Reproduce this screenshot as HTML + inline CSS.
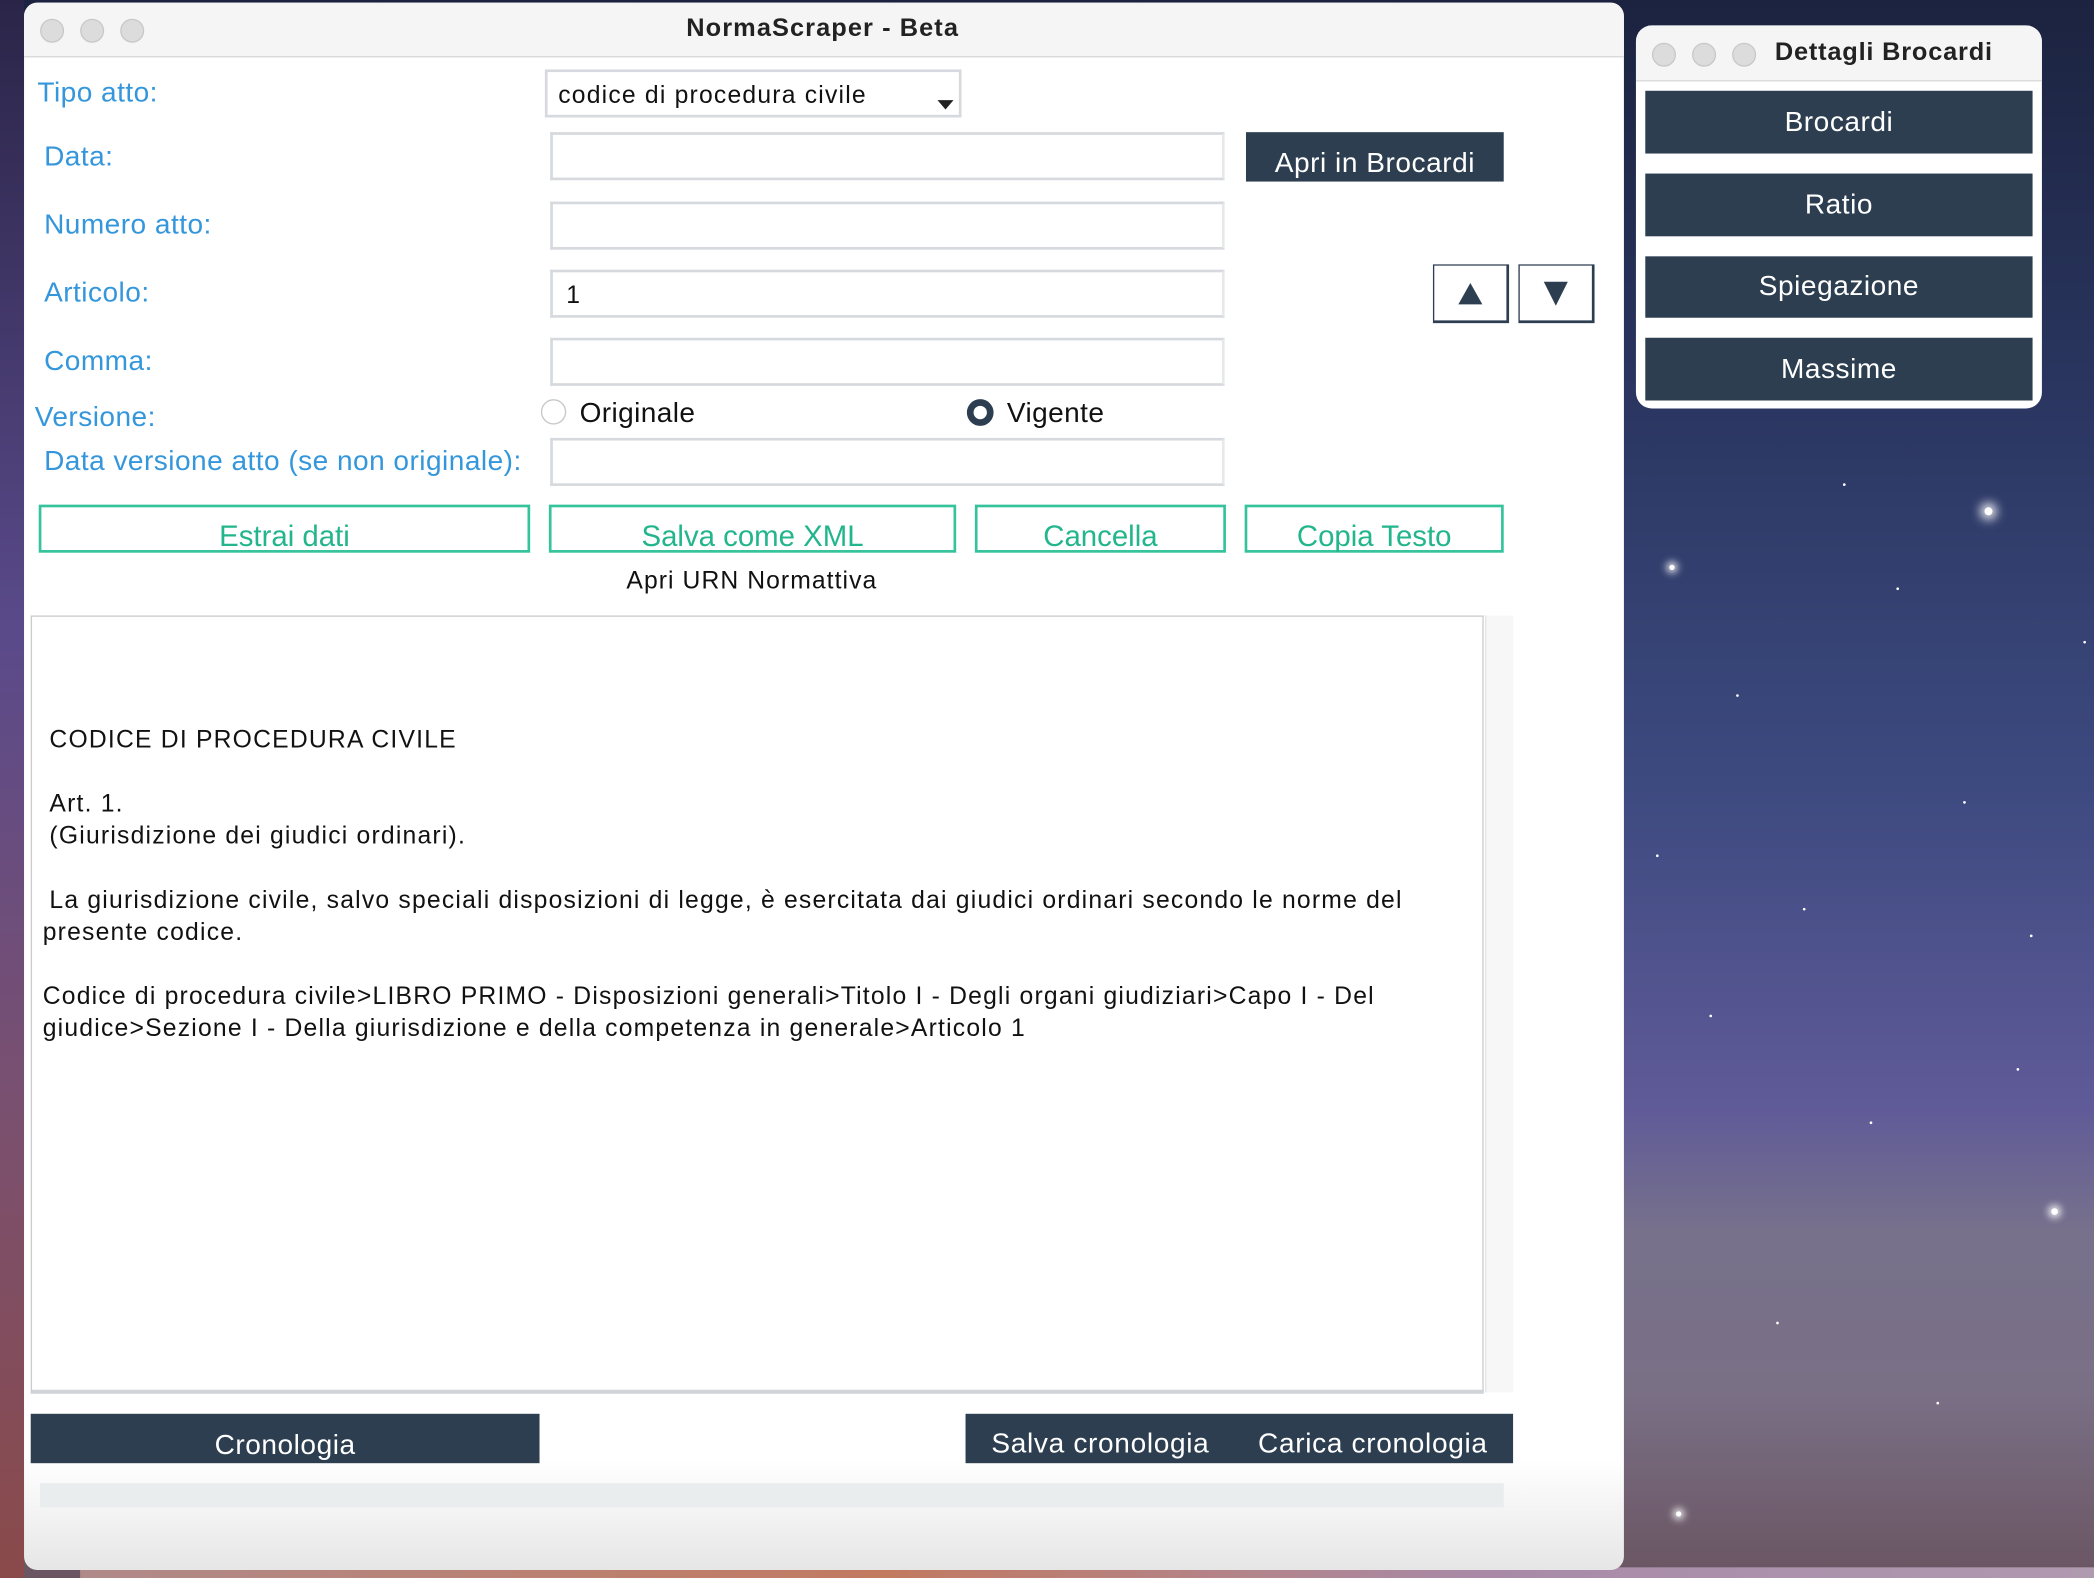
<!DOCTYPE html>
<html><head><meta charset="utf-8"><style>
html,body{margin:0;padding:0;width:2094px;height:1578px;overflow:hidden;}
body{background:#2a3358;}
#w{position:absolute;left:0;top:0;width:1568px;height:1182px;transform:scale(1.33546,1.33503);transform-origin:0 0;font-family:"Liberation Sans",Arial,sans-serif;overflow:hidden;
background:linear-gradient(180deg,#1c2340 0%,#2a3660 25%,#3d4a80 50%,#5f5a98 70%,#77718c 78%,#7a7086 88%,#6a5562 100%);}
.a{position:absolute;}
.lbl{position:absolute;color:#3496db;font-size:21px;letter-spacing:0.35px;}
.inp{position:absolute;left:412px;width:501px;height:32px;border:2px solid #d6d9dd;border-right-color:#e6e8ea;background:#fff;}
.gb{position:absolute;top:378px;height:32px;border:2px solid #34c39b;color:#23b58c;font-size:22px;text-align:center;line-height:44px;letter-spacing:0px;background:#fff;}
.db{position:absolute;background:#2c3e50;color:#fff;font-size:21px;text-align:center;letter-spacing:0.4px;}
.tl{position:absolute;width:16px;height:16px;border-radius:50%;background:#dcdcdc;border:1px solid #c8c8c8;}
.t{position:absolute;font-size:18.5px;color:#111;white-space:nowrap;letter-spacing:0.9px;}
.star{position:absolute;width:2px;height:2px;border-radius:50%;background:#fff;}
</style></head><body><div id="w">
<div class="a" style="left:0;top:0;width:18px;height:1182px;background:linear-gradient(180deg,#2a2548,#5a4a8a 40%,#7a5070 70%,#8a4a4a)"></div>
<div class="a" style="left:60px;top:1174px;width:1508px;height:8px;background:linear-gradient(90deg,#b08a8a,#c27a60 40%,#a88aa8 70%,#b09ab0)"></div>
<!-- stars -->
<div class="star" style="left:1486px;top:380px;width:6px;height:6px;box-shadow:0 0 8px 3px #fff"></div>
<div class="star" style="left:1250px;top:423px;width:4px;height:4px;box-shadow:0 0 6px 2px #fff"></div>
<div class="star" style="left:1536px;top:905px;width:5px;height:5px;box-shadow:0 0 6px 2px #fff"></div>
<div class="star" style="left:1255px;top:1132px;width:4px;height:4px;box-shadow:0 0 6px 2px #fff"></div>
<div class="star" style="left:1380px;top:362px"></div><div class="star" style="left:1420px;top:440px"></div><div class="star" style="left:1300px;top:520px"></div><div class="star" style="left:1470px;top:600px"></div><div class="star" style="left:1350px;top:680px"></div><div class="star" style="left:1280px;top:760px"></div><div class="star" style="left:1510px;top:800px"></div><div class="star" style="left:1400px;top:840px"></div><div class="star" style="left:1330px;top:990px"></div><div class="star" style="left:1450px;top:1050px"></div><div class="star" style="left:1520px;top:700px"></div><div class="star" style="left:1240px;top:640px"></div><div class="star" style="left:1560px;top:480px"></div>

<!-- main window -->
<div class="a" style="left:18px;top:2px;width:1198px;height:1174px;border-radius:10px;background:linear-gradient(180deg,#fff 0%,#fff 93%,#e6e6e6 100%);overflow:hidden">
 <div class="a" style="left:0;top:0;width:1198px;height:40px;background:#f5f5f5;border-bottom:1px solid #d8d8d8"></div>
 <div class="tl" style="left:12px;top:12px"></div><div class="tl" style="left:42px;top:12px"></div><div class="tl" style="left:72px;top:12px"></div>
 <div class="a" style="left:0;width:1196px;top:9px;text-align:center;font-weight:bold;font-size:19px;color:#222;letter-spacing:0.8px">NormaScraper - Beta</div>
</div>
<div class="lbl" style="left:28px;top:58px">Tipo atto:</div>
<div class="lbl" style="left:33px;top:106px">Data:</div>
<div class="lbl" style="left:33px;top:157px">Numero atto:</div>
<div class="lbl" style="left:33px;top:208px">Articolo:</div>
<div class="lbl" style="left:33px;top:259px">Comma:</div>
<div class="lbl" style="left:26px;top:301px">Versione:</div>
<div class="lbl" style="left:33px;top:334px">Data versione atto (se non originale):</div>

<div class="a" style="left:408px;top:52px;width:308px;height:32px;border:2px solid #d6d9dd;background:#fff"></div>
<div class="t" style="left:418px;top:60px">codice di procedura civile</div>
<div class="a" style="left:702px;top:75px;width:0;height:0;border-left:6px solid transparent;border-right:6px solid transparent;border-top:7px solid #222"></div>

<div class="inp" style="top:99px"></div>
<div class="inp" style="top:151px"></div>
<div class="inp" style="top:202px"></div><div class="t" style="left:424px;top:210px">1</div>
<div class="inp" style="top:253px"></div>
<div class="inp" style="top:328px"></div>

<div class="db" style="left:933px;top:99px;width:193px;height:37px;line-height:48px">Apri in Brocardi</div>
<div class="a" style="left:1073px;top:198px;width:54px;height:41px;border:2px solid #2c3e50;border-top-width:1px;border-left-width:1px;background:#fff"></div>
<div class="a" style="left:1092px;top:212px;width:0;height:0;border-left:9px solid transparent;border-right:9px solid transparent;border-bottom:16px solid #2c3e50"></div>
<div class="a" style="left:1137px;top:198px;width:54px;height:41px;border:2px solid #2c3e50;border-top-width:1px;border-left-width:1px;background:#fff"></div>
<div class="a" style="left:1156px;top:211px;width:0;height:0;border-left:9px solid transparent;border-right:9px solid transparent;border-top:18px solid #2c3e50"></div>

<div class="a" style="left:405px;top:299px;width:17px;height:17px;border-radius:50%;border:1.5px solid #c8c8c8;background:#fff"></div>
<div class="a" style="left:434px;top:298px;font-size:21px;color:#111;letter-spacing:0.3px">Originale</div>
<div class="a" style="left:724px;top:299px;width:10px;height:10px;border-radius:50%;border:5px solid #2c3e50;background:#fff"></div>
<div class="a" style="left:754px;top:298px;font-size:21px;color:#111;letter-spacing:0.3px">Vigente</div>

<div class="gb" style="left:29px;width:364px">Estrai dati</div>
<div class="gb" style="left:411px;width:301px">Salva come XML</div>
<div class="gb" style="left:730px;width:184px">Cancella</div>
<div class="gb" style="left:932px;width:190px">Copia Testo</div>
<div class="a" style="left:300px;width:526px;top:424px;text-align:center;font-size:18.5px;color:#111;letter-spacing:0.8px">Apri URN Normattiva</div>

<div class="a" style="left:23px;top:461px;width:1086px;height:579px;border:1px solid #ccc;border-bottom:3px solid #d0d4d8;background:#fff"></div>
<div class="a" style="left:1112px;top:461px;width:20px;height:582px;background:#f7f7f7;border-left:1px solid #e6e6e6"></div>
<div class="t" style="left:37px;top:543px">CODICE DI PROCEDURA CIVILE</div>
<div class="t" style="left:37px;top:591px">Art. 1.</div>
<div class="t" style="left:37px;top:615px">(Giurisdizione dei giudici ordinari).</div>
<div class="t" style="left:37px;top:663px">La giurisdizione civile, salvo speciali disposizioni di legge, è esercitata dai giudici ordinari secondo le norme del</div>
<div class="t" style="left:32px;top:687px">presente codice.</div>
<div class="t" style="left:32px;top:735px">Codice di procedura civile&gt;LIBRO PRIMO - Disposizioni generali&gt;Titolo I - Degli organi giudiziari&gt;Capo I - Del</div>
<div class="t" style="left:32px;top:759px">giudice&gt;Sezione I - Della giurisdizione e della competenza in generale&gt;Articolo 1</div>

<div class="db" style="left:23px;top:1059px;width:381px;height:37px;line-height:48px">Cronologia</div>
<div class="db" style="left:723px;top:1059px;width:410px;height:37px"></div>
<div class="a" style="left:724px;width:200px;top:1070px;text-align:center;color:#fff;font-size:21px;letter-spacing:0.5px">Salva cronologia</div>
<div class="a" style="left:928px;width:200px;top:1070px;text-align:center;color:#fff;font-size:21px;letter-spacing:0.5px">Carica cronologia</div>
<div class="a" style="left:30px;top:1111px;width:1096px;height:18px;background:#e9eded"></div>

<!-- side window -->
<div class="a" style="left:1225px;top:19px;width:304px;height:287px;border-radius:12px;background:#fff;overflow:hidden">
 <div class="a" style="left:0;top:0;width:304px;height:41px;background:#f5f5f5;border-bottom:1px solid #dadada"></div>
 <div class="tl" style="left:12px;top:13px"></div><div class="tl" style="left:42px;top:13px"></div><div class="tl" style="left:72px;top:13px"></div>
 <div class="a" style="left:104px;top:10px;font-weight:bold;font-size:19px;color:#222;letter-spacing:0.6px">Dettagli Brocardi</div>
</div>
<div class="db" style="left:1232px;top:68px;width:290px;height:47px;line-height:47px">Brocardi</div>
<div class="db" style="left:1232px;top:130px;width:290px;height:47px;line-height:47px">Ratio</div>
<div class="db" style="left:1232px;top:192px;width:290px;height:46px;line-height:46px">Spiegazione</div>
<div class="db" style="left:1232px;top:253px;width:290px;height:47px;line-height:47px">Massime</div>
</div></body></html>
